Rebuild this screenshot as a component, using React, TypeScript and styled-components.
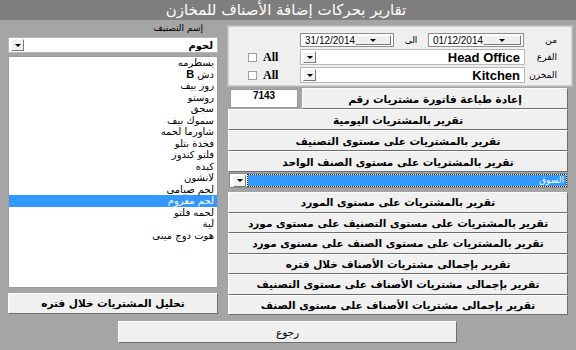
import React from 'react';
import styled, {createGlobalStyle} from 'styled-components';

const GlobalStyle = createGlobalStyle`
  html, body {
    margin: 0;
    padding: 0;
    background: #a5a5a5;
  }
  body {
    font-family: "Liberation Sans", "DejaVu Sans", sans-serif;
    color: #000;
  }
`;

const arabic = `"DejaVu Sans", "Liberation Sans", sans-serif`;

const Page = styled.div`
  width: 576px;
  height: 350px;
  background: #a5a5a5;
  overflow: hidden;
`;

const TitleBar = styled.div`
  height: 20px;
  line-height: 20px;
  background: #7e7e7e;
  color: #ffffff;
  text-align: center;
  font-family: ${arabic};
  font-size: 15px;
  direction: rtl;
  padding-right: 4px;
`;

const Main = styled.div`
  display: flex;
  align-items: flex-start;
  padding: 0 0 0 8px;
  gap: 10px;
`;

const LeftCol = styled.div`
  width: 210px;
  display: flex;
  flex-direction: column;
`;

const RightCol = styled.div`
  width: 344px;
  display: flex;
  flex-direction: column;
  margin-top: 6px;
`;

const FieldLabel = styled.div`
  height: 17px;
  line-height: 17px;
  padding-right: 15px;
  text-align: right;
  direction: rtl;
  font-family: ${arabic};
  font-size: 9px;
`;

const Combo = styled.div<{ $bold?: boolean }>`
  box-sizing: border-box;
  height: 16px;
  display: flex;
  align-items: center;
  background: #ffffff;
  border: 1px solid #b8b8b8;
  padding: 0 4px 0 2px;
  font-size: ${p => (p.$bold ? '13px' : '10px')};
  font-weight: ${p => (p.$bold ? 'bold' : 'normal')};
`;

const ComboText = styled.span`
  flex: 1;
  text-align: right;
  direction: rtl;
  font-family: ${arabic};
  font-size: 10px;
  font-weight: bold;
  white-space: nowrap;
`;

const LatinText = styled.span`
  flex: 1;
  text-align: right;
  white-space: nowrap;
`;

const DropButton = styled.span`
  box-sizing: border-box;
  width: 13px;
  height: 12px;
  flex: none;
  display: flex;
  align-items: center;
  justify-content: center;
  background: #f0f0f0;
  border: 1px solid;
  border-color: #ffffff #7a7a7a #7a7a7a #ffffff;

  &::after {
    content: "";
    width: 0;
    height: 0;
    border-left: 3px solid transparent;
    border-right: 3px solid transparent;
    border-top: 3px solid #000;
  }
`;

const ListBox = styled.div`
  box-sizing: border-box;
  margin-top: 3px;
  height: 232px;
  background: #ffffff;
  border: 1px solid #9a9a9a;
  direction: rtl;
`;

const ListItem = styled.div<{ $selected?: boolean }>`
  height: 11.5px;
  line-height: 11.5px;
  padding-right: 3px;
  font-family: ${arabic};
  font-size: 10px;
  white-space: nowrap;
  background: ${p => (p.$selected ? '#3399ff' : 'transparent')};
  color: ${p => (p.$selected ? '#ffffff' : '#000000')};

  b {
    font-family: "Liberation Sans", sans-serif;
    font-size: 11px;
  }
`;

const Button = styled.div<{ $h?: number }>`
  box-sizing: border-box;
  height: ${p => p.$h ?? 20.5}px;
  display: flex;
  align-items: center;
  justify-content: center;
  background: #f0f0f0;
  border: 1px solid;
  border-color: #fdfdfd #6e6e6e #6e6e6e #fdfdfd;
  font-family: ${arabic};
  font-size: 10.5px;
  font-weight: bold;
  direction: rtl;
  white-space: nowrap;
`;

const LeftButton = styled(Button)`
  margin-top: 5px;
`;

const FilterPanel = styled.div`
  box-sizing: border-box;
  height: 60px;
  background: #efefef;
  border: 1px solid #d2d2d2;
  outline: 1px solid #b5b5b5;
  display: grid;
  grid-template-columns: 52px 225px 32px;
  grid-template-rows: 14px 16px 16px;
  row-gap: 2px;
  align-items: center;
  padding: 6px 0 0 19px;
`;

const DateRow = styled.div`
  grid-column: 2;
  display: flex;
  align-items: center;
  height: 14px;
`;

const DateBox = styled.div<{ $w: number }>`
  box-sizing: border-box;
  width: ${p => p.$w}px;
  height: 14px;
  display: flex;
  align-items: center;
  background: #ffffff;
  border: 1px solid #8c8c8c;
  padding: 0 2px 0 4px;
  font-size: 10px;

  span {
    flex: 1;
  }
`;

const SmallDrop = styled(DropButton)`
  width: 11px;
  height: 10px;
`;

const Between = styled.span`
  width: 34px;
  text-align: center;
  font-family: ${arabic};
  font-size: 9px;
  direction: rtl;
`;

const PanelLabel = styled.span`
  padding-left: 4px;
  font-family: ${arabic};
  font-size: 9px;
  direction: rtl;
  white-space: nowrap;
`;

const AllCheck = styled.label`
  display: flex;
  align-items: center;
  gap: 6px;
  font-family: "Liberation Serif", serif;
  font-weight: bold;
  font-size: 12px;

  &::before {
    content: "";
    box-sizing: border-box;
    width: 9px;
    height: 9px;
    background: #ffffff;
    border: 1px solid #a0a0a0;
  }
`;

const ButtonStack = styled.div`
  display: flex;
  flex-direction: column;
  width: 340px;
  margin-top: 2px;
`;

const InvoiceRow = styled.div`
  display: flex;
  align-items: center;
  height: 21px;
`;

const InvoiceBox = styled.div`
  box-sizing: border-box;
  width: 68px;
  height: 19px;
  margin: 0 4px 0 2px;
  background: #ffffff;
  border: 1px solid #9a9a9a;
  text-align: center;
  font-size: 10px;
  font-weight: bold;
  line-height: 12px;
`;

const SupplierCombo = styled.div`
  box-sizing: border-box;
  height: 15px;
  margin: 1px 0 4px 1px;
  display: flex;
  align-items: center;
  background: #ffffff;
  border: 1px solid #8c8c8c;
  padding-left: 3px;
`;

const SelectedField = styled.div`
  flex: 1;
  height: 11px;
  margin: 0 1px 0 2px;
  background: #3399ff;
  outline: 1px dotted #1a1a1a;
  color: #ffffff;
  text-align: right;
  direction: rtl;
  font-family: ${arabic};
  font-size: 9px;
  line-height: 11px;
  padding-right: 2px;
`;

const Footer = styled.div`
  padding: 6px 0 0 118px;
`;

const BackButton = styled(Button)`
  width: 339px;
  font-weight: normal;
`;

const categories = [
  'يسطرمه', 'دش B', 'روز بيف', 'روستو', 'سجق', 'سموك بيف', 'شاورما لحمه', 'فخدة بتلو',
  'فلتو كندوز', 'كبده', 'لانشون', 'لحم صيامى', 'لحم مفروم', 'لحمه فلتو', 'لية', 'هوت دوج مينى',
];

const topReports = [
  'تقرير بالمشتريات اليومية',
  'تقرير بالمشتريات على مستوى التصنيف',
  'تقرير بالمشتريات على مستوى الصنف الواحد',
];

const supplierReports = [
  'تقرير بالمشتريات على مستوى المورد',
  'تقرير بالمشتريات على مستوى التصنيف على مستوى مورد',
  'تقرير بالمشتريات على مستوى الصنف على مستوى مورد',
  'تقرير بإجمالى مشتريات الأصناف خلال فتره',
  'تقرير بإجمالى مشتريات الأصناف على مستوى التصنيف',
  'تقرير بإجمالى مشتريات الأصناف على مستوى الصنف',
];

const renderItem = (name: string) => {
  if (name.endsWith(' B')) {
    return <>{name.slice(0, -2)} <b>B</b></>;
  }
  return name;
};

export default function App() {
  return (
    <Page>
      <GlobalStyle/>
      <TitleBar>تقارير بحركات إضافة الأصناف للمخازن</TitleBar>
      <Main>
        <LeftCol>
          <FieldLabel>إسم التصنيف</FieldLabel>
          <Combo>
            <DropButton/>
            <ComboText>لحوم</ComboText>
          </Combo>
          <ListBox>
            {categories.map(c => (
              <ListItem key={c} $selected={c === 'لحم مفروم'}>{renderItem(c)}</ListItem>
            ))}
          </ListBox>
          <LeftButton>تحليل المشتريات خلال فتره</LeftButton>
        </LeftCol>

        <RightCol>
          <FilterPanel>
            <DateRow>
              <DateBox $w={94}><span>31/12/2014</span><SmallDrop/></DateBox>
              <Between>الى</Between>
              <DateBox $w={96}><span>01/12/2014</span><SmallDrop/></DateBox>
            </DateRow>
            <PanelLabel>من</PanelLabel>

            <AllCheck>All</AllCheck>
            <Combo $bold>
              <DropButton/>
              <LatinText>Head Office</LatinText>
            </Combo>
            <PanelLabel>الفرع</PanelLabel>

            <AllCheck>All</AllCheck>
            <Combo $bold>
              <DropButton/>
              <LatinText>Kitchen</LatinText>
            </Combo>
            <PanelLabel>المخزن</PanelLabel>
          </FilterPanel>

          <ButtonStack>
            <InvoiceRow>
              <InvoiceBox>7143</InvoiceBox>
              <Button $h={21} style={{flex: 1}}>إعادة طباعة فاتورة مشتريات رقم</Button>
            </InvoiceRow>
            {topReports.map(r => <Button key={r} $h={21}>{r}</Button>)}
            <SupplierCombo>
              <DropButton/>
              <SelectedField>السوق</SelectedField>
            </SupplierCombo>
            {supplierReports.map(r => <Button key={r}>{r}</Button>)}
          </ButtonStack>
        </RightCol>
      </Main>
      <Footer>
        <BackButton $h={22}>رجوع</BackButton>
      </Footer>
    </Page>
  );
}
